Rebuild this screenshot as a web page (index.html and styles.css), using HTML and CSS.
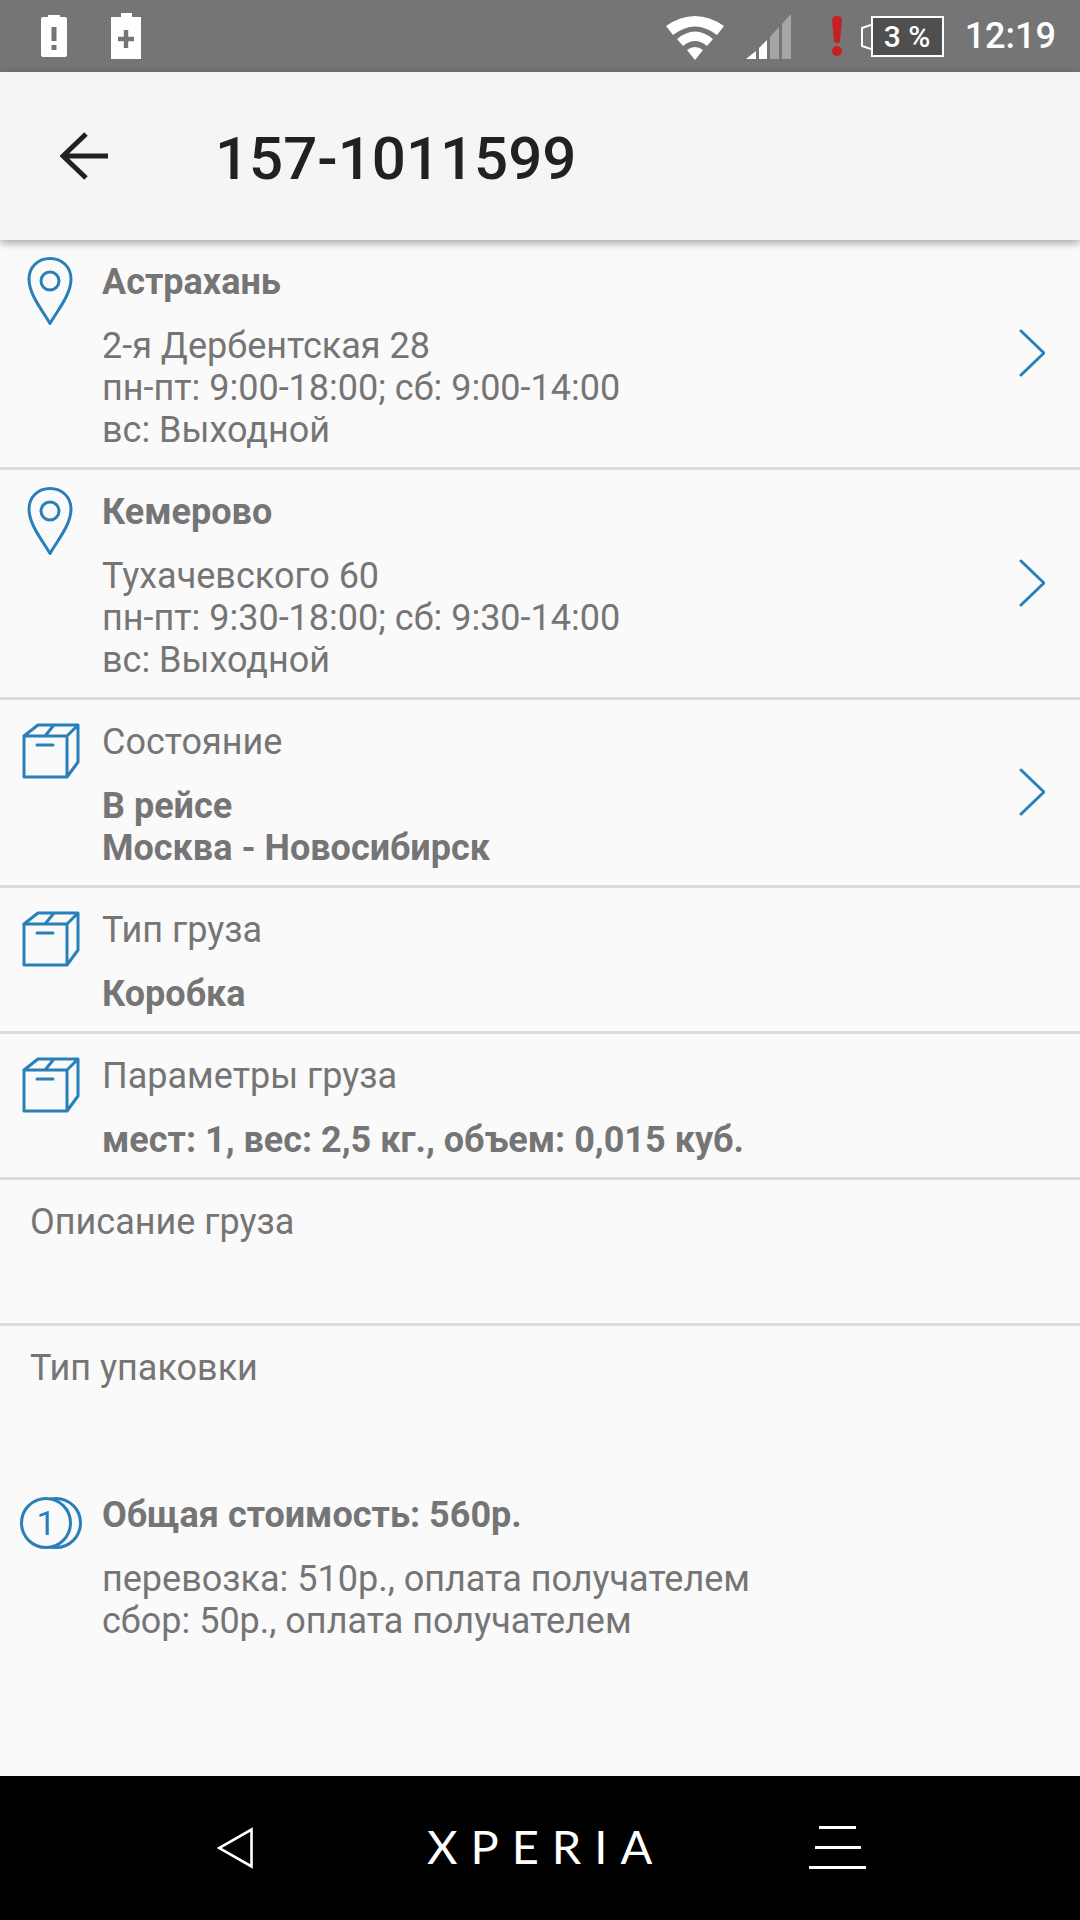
FILE: index.html
```html
<!DOCTYPE html>
<html lang="ru">
<head>
    <meta charset="UTF-8">
    <meta name="viewport" content="width=device-width, initial-scale=1.0">
    <title>157-1011599</title>
    <link rel="stylesheet" href="styles.css">
</head>
<body>
    <svg class="sprites" width="0" height="0">
        <symbol id="pin" viewBox="0 0 46 68">
            <path d="M23 66.5 C16 54 2 38 2 22 C2 10 11 1.5 23 1.5 C35 1.5 44 10 44 22 C44 38 30 54 23 66.5 Z" fill="none" stroke="#2980b9" stroke-width="3" stroke-linejoin="round"/>
            <circle cx="23" cy="24" r="9" fill="none" stroke="#2980b9" stroke-width="3"/>
        </symbol>
        <symbol id="box" viewBox="0 0 58 56">
            <path d="M2 13 H45 V54 H2 Z M2 13 L16 2 H56 L45 13 M56 2 V39 L45 54 M32 2 L23 13 M15 22 H31" fill="none" stroke="#2980b9" stroke-width="3" stroke-linejoin="round" stroke-linecap="round"/>
        </symbol>
        <symbol id="chevron" viewBox="0 0 26 48">
            <path d="M2 2 L25 24 L2 46" fill="none" stroke="#2980b9" stroke-width="3" stroke-linecap="round"/>
        </symbol>
    </svg>

    <div class="status-bar">
        <svg class="batt-alert" width="26" height="42" viewBox="0 0 26 42">
            <path d="M7 0 H19 V2 H24 Q26 2 26 4 V40 Q26 42 24 42 H2 Q0 42 0 40 V4 Q0 2 2 2 H7 Z" fill="#fff"/>
            <rect x="10.5" y="12" width="5" height="14" fill="#757575"/>
            <rect x="10.5" y="30" width="5" height="5" fill="#757575"/>
        </svg>
        <svg class="batt-plus" width="30" height="46" viewBox="0 0 30 46">
            <path d="M6 4 H10 V0 H21 V4 H30 V46 H0 V4 Z" fill="#fff"/>
            <path d="M15 17 V35 M7 26 H23" stroke="#757575" stroke-width="4.4"/>
        </svg>
        <div class="status-right">
            <svg class="wifi" width="58" height="48" viewBox="0 0 58 48">
                <path d="M0 14 Q29 -6 58 14 L51 23 Q29 6 7 23 Z" fill="#fff"/>
                <path d="M11 27 Q29 12 47 27 L41 34 Q29 24 17 34 Z" fill="#fff"/>
                <path d="M21 38 Q29 32 37 38 L29 48 Z" fill="#fff"/>
            </svg>
            <svg class="signal" width="45" height="45" viewBox="0 0 45 45">
                <path d="M0 45 L10 37 V45 Z" fill="#fff"/>
                <path d="M13 34 L21 26 V45 H13 Z" fill="#fff"/>
                <path d="M24 23 L33 13 V45 H24 Z" fill="#a6a6a6"/>
                <path d="M36 10 L45 0 V45 H36 Z" fill="#a6a6a6"/>
            </svg>
            <svg class="alert" width="10" height="40" viewBox="0 0 10 40">
                <path d="M0 4 Q0 0 5 0 Q10 0 10 4 L8 26 Q5 28 2 26 Z" fill="#c62026"/>
                <circle cx="5" cy="35" r="5" fill="#c62026"/>
            </svg>
            <div class="battery">
                <svg class="battery-nub" width="10" height="41" viewBox="0 0 10 41">
                    <path d="M10 9 L1 12 V30 L10 33" fill="none" stroke="#fff" stroke-width="2"/>
                </svg>
                <span class="battery-body">3 %</span>
            </div>
            <span class="clock">12:19</span>
        </div>
    </div>

    <header class="app-bar">
        <svg class="back" width="48" height="48" viewBox="0 0 48 48">
            <path d="M48 24 H3 M26 2 L3 24 L26 46" fill="none" stroke="#212121" stroke-width="5"/>
        </svg>
        <h1>157-1011599</h1>
    </header>

    <main class="content">
        <div class="row">
            <svg class="icon icon-pin"><use href="#pin"/></svg>
            <div class="row-text">
                <div class="strong">Астрахань</div>
                <div class="lines">2-я Дербентская 28<br>пн-пт: 9:00-18:00; сб: 9:00-14:00<br>вс: Выходной</div>
            </div>
            <svg class="chevron"><use href="#chevron"/></svg>
        </div>
        <div class="row">
            <svg class="icon icon-pin"><use href="#pin"/></svg>
            <div class="row-text">
                <div class="strong">Кемерово</div>
                <div class="lines">Тухачевского 60<br>пн-пт: 9:30-18:00; сб: 9:30-14:00<br>вс: Выходной</div>
            </div>
            <svg class="chevron"><use href="#chevron"/></svg>
        </div>
        <div class="row">
            <svg class="icon icon-box"><use href="#box"/></svg>
            <div class="row-text">
                <div>Состояние</div>
                <div class="lines strong">В рейсе<br>Москва - Новосибирск</div>
            </div>
            <svg class="chevron"><use href="#chevron"/></svg>
        </div>
        <div class="row">
            <svg class="icon icon-box"><use href="#box"/></svg>
            <div class="row-text">
                <div>Тип груза</div>
                <div class="lines strong">Коробка</div>
            </div>
        </div>
        <div class="row">
            <svg class="icon icon-box"><use href="#box"/></svg>
            <div class="row-text">
                <div>Параметры груза</div>
                <div class="lines strong">мест: 1, вес: 2,5 кг., объем: 0,015 куб.</div>
            </div>
        </div>
        <div class="row row-plain">
            <div class="row-text">
                <div>Описание груза</div>
                <div class="lines">&nbsp;</div>
            </div>
        </div>
        <div class="row row-plain row-last">
            <div class="row-text">
                <div>Тип упаковки</div>
            </div>
        </div>
        <div class="row row-cost">
            <div class="coin"><span class="coin-back"></span><span class="coin-front">1</span></div>
            <div class="row-text">
                <div class="strong">Общая стоимость: 560р.</div>
                <div class="lines">перевозка: 510р., оплата получателем<br>сбор: 50р., оплата получателем</div>
            </div>
        </div>
    </main>

    <div class="nav-bar">
        <svg class="nav-back" width="36" height="42" viewBox="0 0 36 42">
            <path d="M34.5 2.5 V39.5 L2 21 Z" fill="none" stroke="#fff" stroke-width="2.6"/>
        </svg>
        <span class="logo">XPERIA</span>
        <div class="nav-menu">
            <span class="menu-top"></span>
            <span class="menu-mid"></span>
            <span class="menu-bottom"></span>
        </div>
    </div>
</body>
</html>
```

FILE: styles.css
```css
* {
    box-sizing: border-box;
}
html, body {
    margin: 0;
    padding: 0;
}
body {
    width: 1080px;
    height: 1920px;
    display: flex;
    flex-direction: column;
    font-family: Roboto, "Liberation Sans", sans-serif;
    font-size: 36px;
    line-height: 42px;
    color: #757575;
    background-color: #fafafa;
    overflow: hidden;
}
.sprites {
    display: none;
}

/* status bar */
.status-bar {
    height: 72px;
    flex: none;
    display: flex;
    align-items: center;
    padding: 0 24px 0 41px;
    background-color: #757575;
}
.batt-plus {
    margin-left: 44px;
}
.status-right {
    margin-left: auto;
    display: flex;
    align-items: center;
}
.wifi {
    margin-right: 22px;
}
.signal {
    margin-right: 41px;
}
.alert {
    margin-right: 19px;
}
.battery {
    display: flex;
    align-items: center;
    margin-right: 21px;
}
.battery-body {
    width: 73px;
    height: 41px;
    border: 2px solid #fff;
    background-color: #4f4f4f;
    color: #fff;
    font-size: 30px;
    font-weight: 500;
    line-height: 37px;
    text-align: center;
}
.clock {
    color: #fff;
    font-size: 36px;
    font-weight: 500;
}

/* toolbar */
.app-bar {
    height: 168px;
    flex: none;
    display: flex;
    align-items: center;
    padding-left: 60px;
    background-color: #f5f5f5;
    box-shadow: 0 3px 8px rgba(0,0,0,0.35);
    position: relative;
}
.app-bar h1 {
    margin: 5px 0 0 107px;
    font-size: 60px;
    font-weight: 500;
    line-height: 70px;
    color: #212121;
}

/* list */
.content {
    flex: 1;
}
.row {
    display: flex;
    padding: 21px 0 16.5px 102px;
    border-bottom: 3px solid #dcdcdc;
    position: relative;
}
.row-text {
    flex: 1;
}
.strong {
    font-weight: 700;
}
.lines {
    margin-top: 21.5px;
}
.row-plain {
    padding-left: 30px;
}
.row-last {
    height: 147px;
    border-bottom: none;
}
.row-cost {
    border-bottom: none;
}
.icon {
    position: absolute;
}
.icon-pin {
    left: 27px;
    top: 17px;
    width: 46px;
    height: 68px;
}
.icon-box {
    left: 22px;
    top: 23px;
    width: 58px;
    height: 56px;
}
.chevron {
    width: 26px;
    height: 48px;
    margin: 0 35px 5px 0;
    align-self: center;
}
.coin {
    position: absolute;
    left: 20px;
    top: 24px;
    width: 62px;
    height: 52px;
}
.coin-back, .coin-front {
    position: absolute;
    top: 0;
    width: 52px;
    height: 52px;
    border: 3px solid #2980b9;
    border-radius: 50%;
}
.coin-back {
    left: 10px;
}
.coin-front {
    left: 0;
    background-color: #fafafa;
    color: #2980b9;
    font-size: 34px;
    font-weight: 400;
    line-height: 46px;
    text-align: center;
}

/* bottom navigation */
.nav-bar {
    height: 144px;
    flex: none;
    display: flex;
    align-items: flex-start;
    background-color: #000;
}
.nav-back {
    margin: 51px 0 0 217px;
}
.logo {
    margin: 46px 0 0 174px;
    width: 227px;
    color: #fff;
    font-family: Lato, sans-serif;
    font-size: 47px;
    font-weight: 400;
    line-height: 48px;
    letter-spacing: 13px;
    white-space: nowrap;
}
.nav-menu {
    margin: 50px 0 0 155px;
    width: 57px;
    display: flex;
    flex-direction: column;
    align-items: center;
    gap: 17px;
}
.nav-menu span {
    height: 3px;
    background-color: #fff;
}
.menu-top {
    width: 37px;
}
.menu-mid {
    width: 46px;
}
.menu-bottom {
    width: 57px;
}
```
